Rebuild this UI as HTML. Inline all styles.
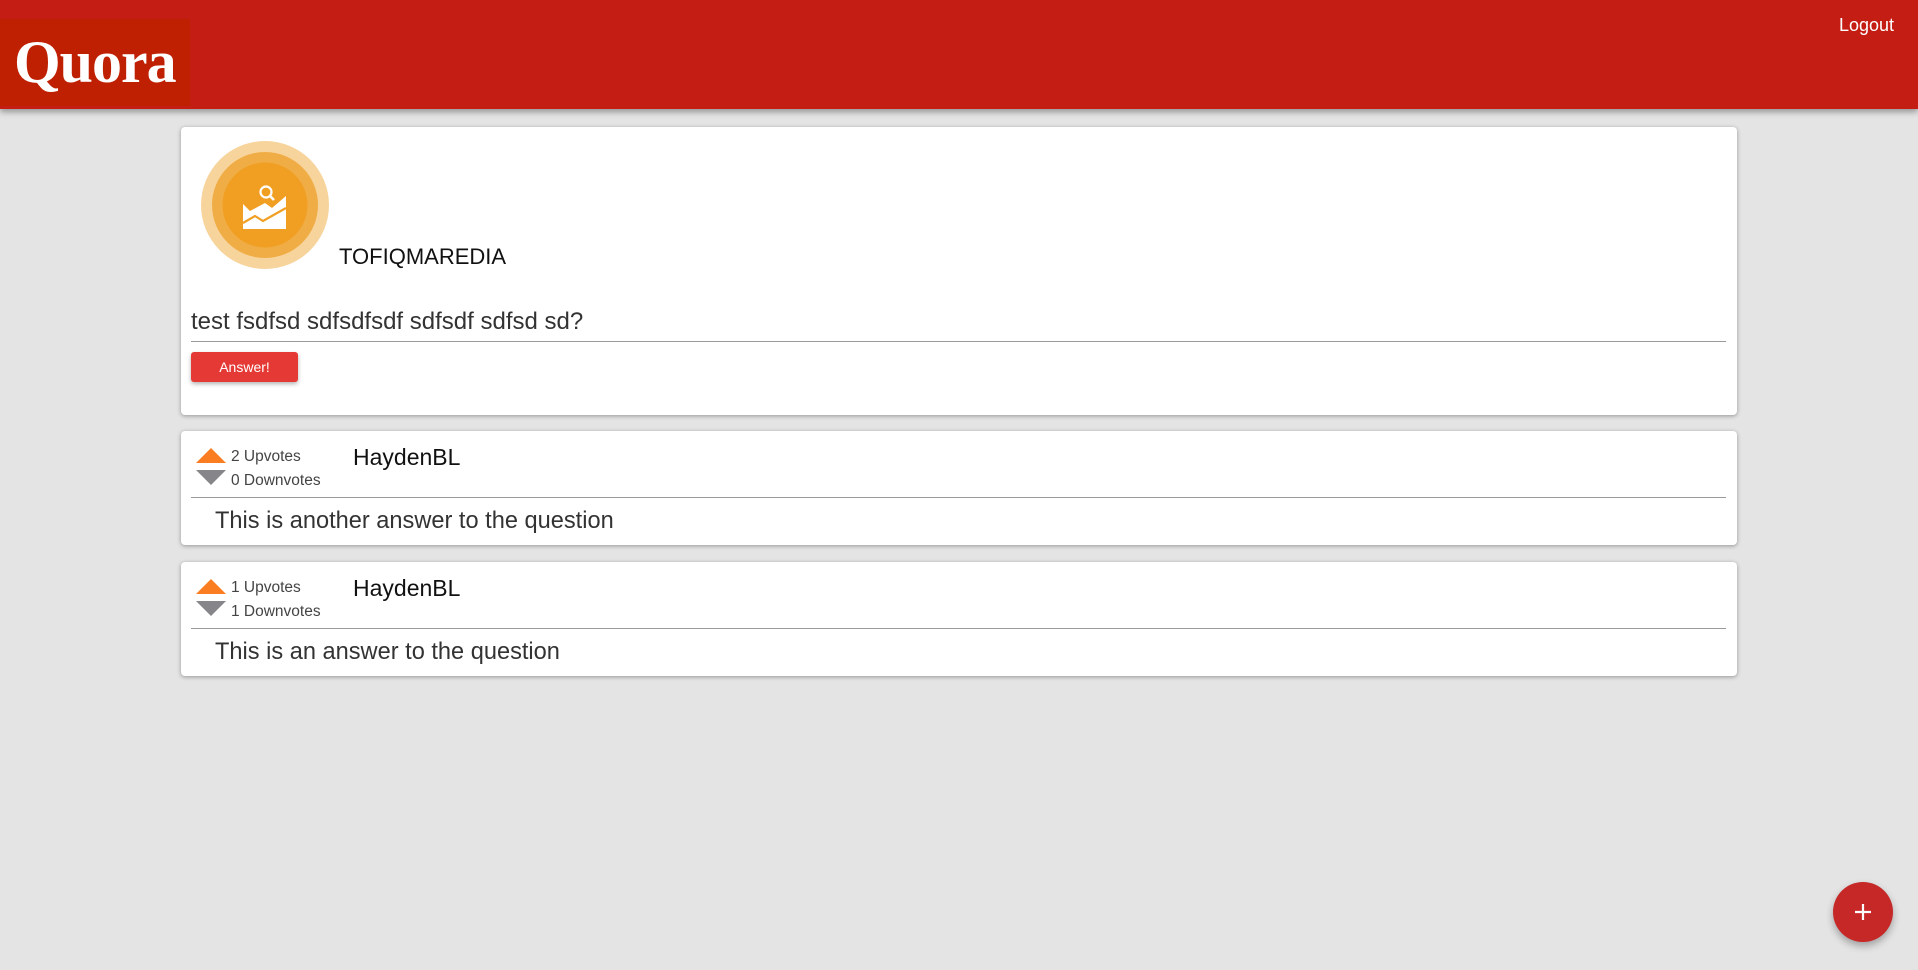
<!DOCTYPE html>
<html><head><meta charset="utf-8"><style>
*{box-sizing:border-box;margin:0;padding:0}
body{width:1918px;height:970px;background:#e4e4e4;font-family:"Liberation Sans",sans-serif;position:relative;overflow:hidden}
.hdr{position:absolute;left:0;top:0;width:1918px;height:109px;background:#c41d13;box-shadow:0 3px 6px rgba(0,0,0,.35)}
.logo{position:absolute;left:0;top:19px;width:190px;height:87px;background:#bf2001}
.logo span{position:absolute;left:14px;top:9px;font-family:"Liberation Serif",serif;font-weight:bold;color:#fff;font-size:60px;letter-spacing:-1px}
.logout{position:absolute;left:1839px;top:15px;color:#fff;font-size:18px}
.card{position:absolute;left:181px;width:1556px;background:#fff;border-radius:4px;box-shadow:0 1px 4px rgba(0,0,0,.35)}
.t{position:absolute;white-space:nowrap;color:#222}
.line{position:absolute;height:1px;background:#9a9a9a}
.up{position:absolute;width:0;height:0;border-left:15px solid transparent;border-right:15px solid transparent;border-bottom:15px solid #fb7d22}
.dn{position:absolute;width:0;height:0;border-left:15px solid transparent;border-right:15px solid transparent;border-top:15px solid #85858a}
.btn{position:absolute;width:107px;height:30px;background:#e53935;border-radius:3px;color:#fff;font-size:14px;text-align:center;line-height:30px;box-shadow:0 2px 4px rgba(0,0,0,.3)}
.fab{position:absolute;left:1833px;top:882px;width:60px;height:60px;border-radius:50%;background:#c62828;box-shadow:0 4px 8px rgba(0,0,0,.3)}
.v{font-size:15.5px;color:#444}
</style></head><body>
<div class="hdr"><div class="logo"><span>Quora</span></div><div class="logout">Logout</div></div>

<div class="card" style="top:127px;height:288px">
  <svg style="position:absolute;left:20px;top:14px" width="128" height="128" viewBox="0 0 128 128">
    <circle cx="64" cy="64" r="64" fill="#f7d49c"/>
    <circle cx="64" cy="64" r="53" fill="#f0ad45"/>
    <circle cx="64" cy="64" r="42.5" fill="#f09f22"/>
    <path d="M42 88 L42 63 L49 70 L64 62 L71 67 L85 55 L85 88 Z" fill="#fff"/>
    <path d="M42 82 L54 75 L62 80 L85 67" stroke="#f09f22" stroke-width="2.2" fill="none"/>
    <circle cx="65" cy="51" r="5.5" stroke="#fff" stroke-width="2.2" fill="none"/>
    <path d="M69 55 L73 59" stroke="#fff" stroke-width="2.6"/>
  </svg>
  <div class="t" style="left:158px;top:117px;font-size:22px;color:#111">TOFIQMAREDIA</div>
  <div class="t" style="left:10px;top:181px;font-size:24px;color:#333">test fsdfsd sdfsdfsdf sdfsdf sdfsd sd?</div>
  <div class="line" style="left:10px;top:214px;width:1535px"></div>
  <div class="btn" style="left:10px;top:225px">Answer!</div>
</div>

<div class="card" style="top:431px;height:114px">
  <div class="up" style="left:15px;top:17px"></div>
  <div class="dn" style="left:15px;top:39px"></div>
  <div class="t v" style="left:50px;top:17px">2 Upvotes</div>
  <div class="t v" style="left:50px;top:41px">0 Downvotes</div>
  <div class="t" style="left:172px;top:13px;font-size:23px;color:#111">HaydenBL</div>
  <div class="line" style="left:10px;top:66px;width:1535px"></div>
  <div class="t" style="left:34px;top:77px;font-size:23.6px;color:#333">This is another answer to the question</div>
</div>

<div class="card" style="top:562px;height:114px">
  <div class="up" style="left:15px;top:17px"></div>
  <div class="dn" style="left:15px;top:39px"></div>
  <div class="t v" style="left:50px;top:17px">1 Upvotes</div>
  <div class="t v" style="left:50px;top:41px">1 Downvotes</div>
  <div class="t" style="left:172px;top:13px;font-size:23px;color:#111">HaydenBL</div>
  <div class="line" style="left:10px;top:66px;width:1535px"></div>
  <div class="t" style="left:34px;top:77px;font-size:23.6px;color:#333">This is an answer to the question</div>
</div>

<div class="fab"><svg width="60" height="60"><path d="M22 30H38M30 22V38" stroke="#fff" stroke-width="2.2"/></svg></div>
</body></html>
